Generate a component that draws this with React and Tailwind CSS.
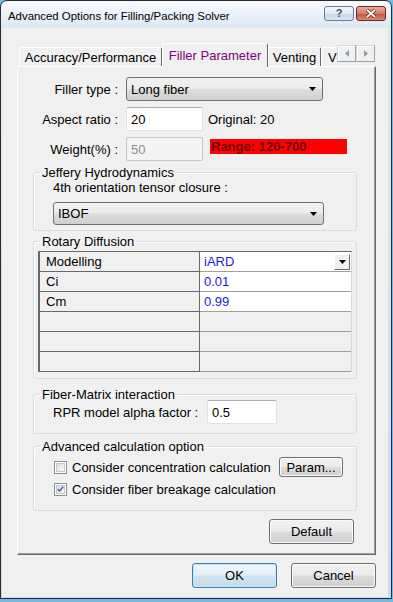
import React from "react";

const BTN_BG =
  "bg-[linear-gradient(#f2f2f2_0%,#ebebeb_48%,#dddddd_52%,#cfcfcf_100%)]";

function Combo({ value, className }) {
  return (
    <div
      className={`flex items-center justify-between rounded-[3px] border border-[#707070] ${BTN_BG} pl-[4px] pr-[6px] ${className}`}
    >
      <span>{value}</span>
      <svg width="7" height="4" viewBox="0 0 7 4">
        <path d="M0 0h7L3.5 4z" fill="#000" />
      </svg>
    </div>
  );
}

function TextBox({ value, disabled, className }) {
  return (
    <div
      className={`flex items-center h-[24px] pl-[4px] border rounded-[2px] ${
        disabled
          ? "bg-[#f4f4f4] border-[#c7c7c7] text-[#8d8d8d]"
          : "bg-white border-[#e1e3ea] border-t-[#abadb3]"
      } ${className}`}
    >
      {value}
    </div>
  );
}

function Button({ children, className, focused }) {
  return (
    <div
      className={`flex items-center justify-center rounded-[3px] border ${
        focused
          ? "border-[#3c7fb1] shadow-[inset_0_0_0_1px_#c6e4f7] bg-[linear-gradient(#eef6fb_0%,#e3eff7_48%,#d2e4f0_52%,#c4dbea_100%)]"
          : `border-[#707070] ${BTN_BG} shadow-[inset_0_0_0_1px_#fbfbfb]`
      } ${className}`}
    >
      {children}
    </div>
  );
}

function Check({ checked }) {
  return (
    <div className="w-[13px] h-[13px] border border-[#8e8f8f] bg-white p-[1px] shrink-0">
      <div className="w-full h-full border border-[#c4c7cb] bg-[linear-gradient(135deg,#dcdde0,#fbfbfb)] flex items-center justify-center">
        {checked && (
          <svg width="9" height="8" viewBox="0 0 9 8">
            <path d="M1 4l2.3 2.4L8 1" fill="none" stroke="#4a5f97" strokeWidth="1.8" />
          </svg>
        )}
      </div>
    </div>
  );
}

function Tab({ children, selected, className }) {
  return (
    <div
      className={`flex items-center justify-center border-l border-t border-white border-r border-r-[#696969] rounded-t-[2px] ${
        selected
          ? "h-[24px] -mb-[1px] z-10 text-[#800080] bg-[#f0f0f0]"
          : "h-[19px] bg-[#f0f0f0]"
      } ${className}`}
    >
      {children}
    </div>
  );
}

function Group({ title, className, children }) {
  return (
    <fieldset
      className={`ml-[15px] w-[324px] border border-[#d5dfe5] rounded-[3px] shadow-[inset_1px_1px_0_#fff] ${className}`}
    >
      <legend className="ml-[6px] px-[2px]">{title}</legend>
      {children}
    </fieldset>
  );
}

const ROWS = [
  ["Modelling", "iARD", true],
  ["Ci", "0.01"],
  ["Cm", "0.99"],
  ["", null],
  ["", null],
  ["", null],
];

export default function App() {
  return (
    <div className="w-[393px] h-[602px] bg-[#6fbbe6] overflow-hidden font-['Liberation_Sans',Arial,sans-serif] text-[13px] leading-[15px] text-black">
      <div className="w-[392px] h-[599px] flex flex-col rounded-t-[7px] border border-[#2b2b2b] bg-[linear-gradient(#f8fbfe,#dbe7f4_28px,#c9dbef)]">
        {/* title bar */}
        <div className="h-[27px] flex items-start shrink-0">
          <span className="mt-[8px] ml-[7px] text-[11.4px] leading-[14px]">
            Advanced Options for Filling/Packing Solver
          </span>
          <div className="ml-auto mr-[5px] mt-[5px] flex gap-[2px]">
            <div className="w-[30px] h-[15px] rounded-[3px] border border-[#6c7b93] bg-[linear-gradient(#f3f7fc_0%,#dfe8f3_50%,#c5d5e8_52%,#d8e4f2_100%)] flex items-center justify-center">
              <span className="text-[11px] leading-[11px] font-bold text-[#3c4a5e] [text-shadow:0_0_1px_#fff]">
                ?
              </span>
            </div>
            <div className="w-[30px] h-[15px] rounded-[3px] border border-[#6e2a22] bg-[linear-gradient(#e9a99b_0%,#d47f6c_50%,#c1533f_52%,#d98a74_100%)] flex items-center justify-center">
              <svg width="12" height="9" viewBox="0 0 12 9">
                <path d="M2 1l8 7M10 1l-8 7" stroke="#5a1f17" strokeWidth="3.2" />
                <path d="M2 1l8 7M10 1l-8 7" stroke="#fff" strokeWidth="1.8" />
              </svg>
            </div>
          </div>
        </div>

        {/* client area */}
        <div className="flex-1 ml-[1px] mr-[3px] mb-[1px] bg-[#f0f0f0] pl-[15px] pr-[12px] pt-[15px] flex flex-col">
          {/* tabs */}
          <div className="flex items-end h-[23px] pl-[2px]">
            <Tab className="w-[143px]">Accuracy/Performance</Tab>
            <Tab selected className="w-[106px]">
              Filler Parameter
            </Tab>
            <Tab className="w-[53px]">Venting</Tab>
            <div className="w-[16px] h-[19px] border-l border-t border-white pl-[6px] flex items-center overflow-hidden">
              V
            </div>
            <div className="self-start mt-[2px] flex">
              {["M4 0v7L0 3.5z", "M0 0v7l4-3.5z"].map((d) => (
                <div
                  key={d}
                  className="w-[19px] h-[17px] bg-[#f0f0f0] border border-[#d6d6d6] border-b-[#a0a0a0] border-r-[#a0a0a0] shadow-[inset_1px_1px_0_#fff] flex items-center justify-center"
                >
                  <svg width="4" height="7" viewBox="0 0 4 7">
                    <path d={d} fill="#8aa0b8" />
                  </svg>
                </div>
              ))}
            </div>
          </div>

          {/* tab panel */}
          <div className="w-[359px] border-t border-l border-white border-r border-b border-r-[#696969] border-b-[#696969] shadow-[inset_-1px_-1px_0_#a0a0a0] pb-[10px] flex flex-col">
            <div className="flex items-center mt-[10px]">
              <span className="w-[100px] text-right">Filler type :</span>
              <Combo value="Long fiber" className="ml-[8px] w-[197px] h-[24px]" />
            </div>
            <div className="flex items-center mt-[6px]">
              <span className="w-[100px] text-right">Aspect ratio :</span>
              <TextBox value="20" className="ml-[8px] w-[77px]" />
              <span className="ml-[5px]">Original: 20</span>
            </div>
            <div className="flex items-center mt-[6px]">
              <span className="w-[100px] text-right">Weight(%) :</span>
              <TextBox value="50" disabled className="ml-[8px] w-[77px]" />
              <div className="ml-[7px] -mt-[5px] w-[137px] h-[15px] bg-[#ff0000] pl-[1px] font-bold text-[#6e0000]">
                Range: 120-700
              </div>
            </div>

            <Group title="Jeffery Hydrodynamics" className="mt-[4px] pb-[5px]">
              <div className="pl-[19px]">4th orientation tensor closure :</div>
              <Combo value="IBOF" className="ml-[19px] mt-[7px] w-[271px] h-[23px]" />
            </Group>

            <Group title="Rotary Diffusion" className="mt-[3px] pb-[6px]">
              <div className="ml-[4px] mt-[2px] w-[314px] border-t border-l-2 border-[#696969] border-r border-r-[#d8d8d8] bg-[#f0f0f0]">
                {ROWS.map(([name, value, drop], i) => (
                  <div key={i} className="flex h-[20px]">
                    <div className="w-[160px] border-r border-b border-[#696969] pl-[6px] flex items-center">
                      {name}
                    </div>
                    <div
                      className={`flex-1 border-b ${
                        value !== null
                          ? "bg-white border-[#a0a0a0]"
                          : "border-[#a0a0a0]"
                      } ${i === ROWS.length - 1 ? "border-[#696969]" : ""} pl-[4px] flex items-center text-[#1a1adc]`}
                    >
                      {value}
                      {drop && (
                        <div className="ml-auto mr-[1px] w-[16px] h-[16px] bg-[#f0f0f0] border border-white border-r-[#696969] border-b-[#696969] flex items-center justify-center">
                          <svg width="7" height="4" viewBox="0 0 7 4">
                            <path d="M0 0h7L3.5 4z" fill="#000" />
                          </svg>
                        </div>
                      )}
                    </div>
                  </div>
                ))}
              </div>
            </Group>

            <Group title="Fiber-Matrix interaction" className="mt-[8px] pb-[9px]">
              <div className="flex items-center -mt-[2px] pl-[19px]">
                <span className="w-[154px]">RPR model alpha factor :</span>
                <TextBox value="0.5" className="w-[70px]" />
              </div>
            </Group>

            <Group title="Advanced calculation option" className="mt-[5px] pb-[10px]">
              <div className="flex items-center h-[22px] mt-[2px] pl-[20px]">
                <Check />
                <span className="ml-[5px] w-[207px]">Consider concentration calculation</span>
                <Button className="w-[64px] h-[20px]">Param...</Button>
              </div>
              <div className="flex items-center h-[22px] pl-[20px]">
                <Check checked />
                <span className="ml-[5px]">Consider fiber breakage calculation</span>
              </div>
            </Group>

            <Button className="self-end mr-[21px] mt-[8px] w-[85px] h-[25px]">Default</Button>
          </div>

          <div className="flex justify-end gap-[14px] mt-[8px] w-[359px]">
            <Button focused className="w-[85px] h-[25px]">
              OK
            </Button>
            <Button className="w-[85px] h-[25px]">Cancel</Button>
          </div>
        </div>
      </div>
    </div>
  );
}
